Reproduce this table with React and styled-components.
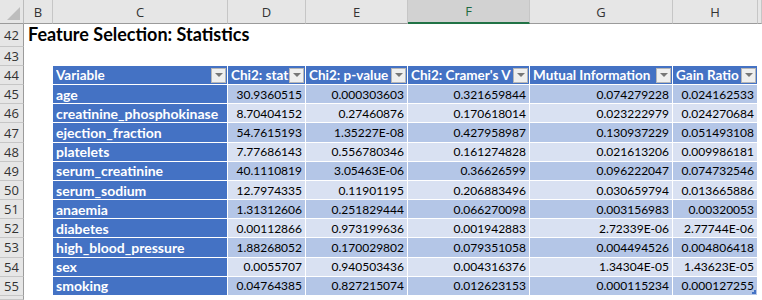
import React from "react";
import styled, { createGlobalStyle, css } from "styled-components";

const Global = createGlobalStyle`
  html, body { margin: 0; padding: 0; background: #fff; }
  body { width: 762px; height: 300px; overflow: hidden; font-family: Lato, "Open Sans", sans-serif; }
`;

const ROW_H = 19.17;

const Sheet = styled.div`
  display: grid;
  grid-template-columns: 24px 29px 175px 78px 102px 122px 143px 85px 1fr;
  grid-template-rows: 24px 23px 19px repeat(12, ${ROW_H}px) 1fr;
  width: 762px;
  height: 300px;
  overflow: hidden;
  font-size: 14px;
  color: #000;
`;

const Corner = styled.div`
  background: #e6e6e6;
  border-right: 1px solid #bcbcbc;
  border-bottom: 1px solid #9b9b9b;
  position: relative;
  box-sizing: border-box;
  &::after {
    content: "";
    position: absolute;
    right: 3px;
    bottom: 3px;
    width: 0;
    height: 0;
    border-left: 13px solid transparent;
    border-bottom: 13px solid #bdbdbd;
  }
`;

const ColHead = styled.div`
  box-sizing: border-box;
  display: flex;
  align-items: center;
  justify-content: center;
  background: ${(p) => (p.$selected ? "#d2d2d2" : "#e6e6e6")};
  color: ${(p) => (p.$selected ? "#1e6b41" : "#333")};
  border-right: 1px solid #c6c6c6;
  border-bottom: ${(p) => (p.$selected ? "2px solid #217346" : "1px solid #9b9b9b")};
  font-family: "Open Sans", Lato, sans-serif;
  font-size: 13px;
`;

const RowHead = styled.div`
  box-sizing: border-box;
  display: flex;
  align-items: center;
  justify-content: center;
  background: #e6e6e6;
  color: #333;
  border-right: 1px solid #9b9b9b;
  border-bottom: 1px solid #c6c6c6;
  font-family: "Open Sans", Lato, sans-serif;
  font-size: 13px;
`;

const Blank = styled.div``;

const Title = styled.div`
  grid-column: 2 / -1;
  display: flex;
  align-items: flex-end;
  padding: 0 0 2px 4px;
  font-weight: 700;
  font-size: 18px;
  white-space: nowrap;
`;

const cellBase = css`
  box-sizing: border-box;
  display: flex;
  align-items: center;
  border-right: 1px solid #fff;
  border-bottom: 1px solid #fff;
  white-space: nowrap;
  overflow: hidden;
  min-width: 0;
`;

const HeadCell = styled.div`
  ${cellBase};
  background: #4472c4;
  color: #fff;
  font-weight: 700;
  font-size: 13.5px;
  padding-left: 3px;
  padding-right: 1px;
`;

const HeadLabel = styled.span`
  flex: 1;
  min-width: 0;
  overflow: hidden;
`;

const DropButton = styled.span`
  flex: none;
  width: 15px;
  height: 15px;
  box-sizing: border-box;
  background: #efefef;
  border: 1px solid #b7b7b7;
  display: flex;
  align-items: center;
  justify-content: center;
  &::after {
    content: "";
    width: 0;
    height: 0;
    border-left: 4px solid transparent;
    border-right: 4px solid transparent;
    border-top: 4px solid #777;
  }
`;

const NameCell = styled.div`
  ${cellBase};
  background: #4472c4;
  color: #fff;
  font-weight: 700;
  padding-left: 3px;
`;

const ValueCell = styled.div`
  ${cellBase};
  position: relative;
  justify-content: flex-end;
  padding-right: 3px;
  font-size: 12px;
  background: ${(p) => (p.$band ? "#b4c6e7" : "#d9e1f2")};
`;

const ResizeHandle = styled.span`
  position: absolute;
  right: 1px;
  bottom: 1px;
  width: 4px;
  height: 4px;
  border-right: 2px solid #4472c4;
  border-bottom: 2px solid #4472c4;
  box-sizing: border-box;
`;

const columns = [
  { l: "B" },
  { l: "C" },
  { l: "D" },
  { l: "E" },
  { l: "F", selected: true },
  { l: "G" },
  { l: "H" },
  { l: "" },
];

const headers = [
  "Variable",
  "Chi2: stat",
  "Chi2: p-value",
  "Chi2: Cramer's V",
  "Mutual Information",
  "Gain Ratio",
];

const data = [
  ["age", "30.9360515", "0.000303603", "0.321659844", "0.074279228", "0.024162533"],
  ["creatinine_phosphokinase", "8.70404152", "0.27460876", "0.170618014", "0.023222979", "0.024270684"],
  ["ejection_fraction", "54.7615193", "1.35227E-08", "0.427958987", "0.130937229", "0.051493108"],
  ["platelets", "7.77686143", "0.556780346", "0.161274828", "0.021613206", "0.009986181"],
  ["serum_creatinine", "40.1110819", "3.05463E-06", "0.36626599", "0.096222047", "0.074732546"],
  ["serum_sodium", "12.7974335", "0.11901195", "0.206883496", "0.030659794", "0.013665886"],
  ["anaemia", "1.31312606", "0.251829444", "0.066270098", "0.003156983", "0.00320053"],
  ["diabetes", "0.00112866", "0.973199636", "0.001942883", "2.72339E-06", "2.77744E-06"],
  ["high_blood_pressure", "1.88268052", "0.170029802", "0.079351058", "0.004494526", "0.004806418"],
  ["sex", "0.0055707", "0.940503436", "0.004316376", "1.34304E-05", "1.43623E-05"],
  ["smoking", "0.04764385", "0.827215074", "0.012623153", "0.000115234", "0.000127255"],
];

export default function App() {
  return (
    <>
      <Global />
      <Sheet>
        <Corner />
        {columns.map((c, i) => (
          <ColHead key={i} $selected={c.selected}>
            {c.l}
          </ColHead>
        ))}

        <RowHead>42</RowHead>
        <Title>Feature Selection: Statistics</Title>

        <RowHead>43</RowHead>
        {columns.map((_, i) => (
          <Blank key={i} />
        ))}

        <RowHead>44</RowHead>
        <Blank />
        {headers.map((h) => (
          <HeadCell key={h}>
            <HeadLabel>{h}</HeadLabel>
            <DropButton />
          </HeadCell>
        ))}
        <Blank />

        {data.map((row, r) => {
          const last = r === data.length - 1;
          return (
            <React.Fragment key={row[0]}>
              <RowHead>{45 + r}</RowHead>
              <Blank />
              <NameCell>{row[0]}</NameCell>
              {row.slice(1).map((v, j) => (
                <ValueCell key={j} $band={r % 2 === 0}>
                  {v}
                  {last && j === 4 ? <ResizeHandle /> : null}
                </ValueCell>
              ))}
              <Blank />
            </React.Fragment>
          );
        })}

        <RowHead />
      </Sheet>
    </>
  );
}
